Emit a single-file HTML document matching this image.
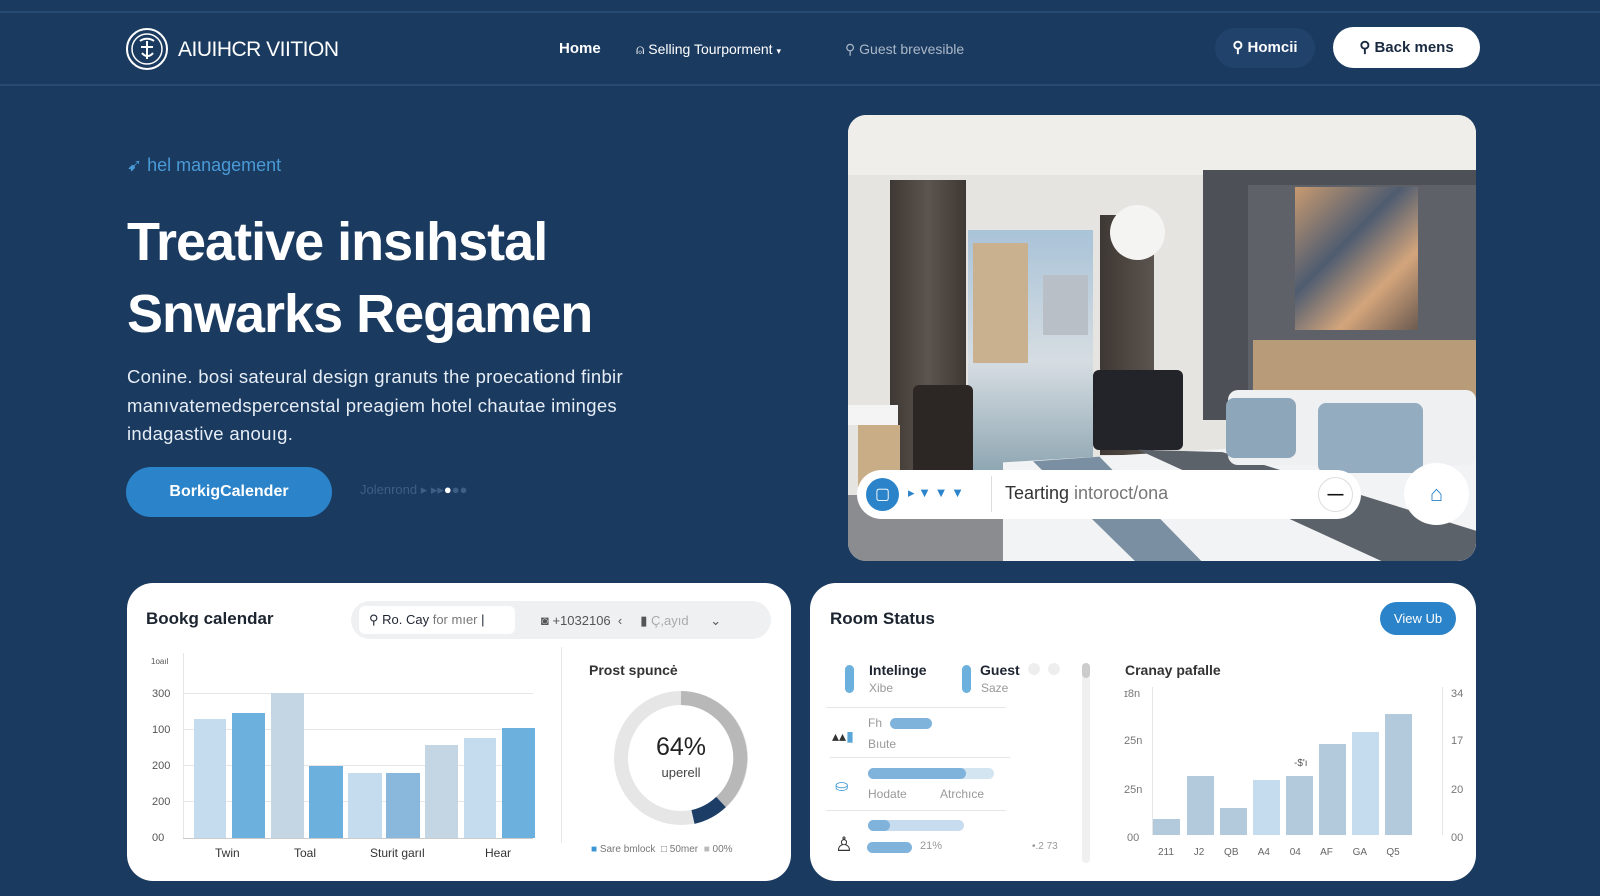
<!DOCTYPE html>
<html><head><meta charset="utf-8"><style>
*{box-sizing:border-box;margin:0;padding:0}
body{width:1600px;height:896px;overflow:hidden;background:#1a3a60;font-family:"Liberation Sans",sans-serif;position:relative;color:#fff}
.a{position:absolute}
.nav{left:0;top:11px;width:1600px;height:75px;border-top:2px solid #274a72;border-bottom:2px solid #274a72}
.card{background:#fff;border-radius:26px;color:#1c2430}
.lbl{font-size:11px;color:#555}
</style></head><body>
<div class="a nav"></div>
<svg class="a" style="left:125px;top:27px" width="44" height="44" viewBox="0 0 44 44"><circle cx="22" cy="22" r="20" fill="none" stroke="#fff" stroke-width="2"/><circle cx="22" cy="22" r="15" fill="none" stroke="#fff" stroke-width="1.5"/><path d="M15 14c4-3 10-3 14 0M16 20h12M17 26c3 4 8 4 11 0M22 14v18" stroke="#fff" stroke-width="2" fill="none"/></svg>
<div class="a" style="left:178px;top:38px;font-size:21px;letter-spacing:-0.5px">AIUIHCR VIITION</div>
<div class="a" style="left:559px;top:40px;font-size:15px;font-weight:bold">Home</div>
<div class="a" style="left:636px;top:41px;font-size:14px">⍝ Selling Tourporment <span style="font-size:9px">▾</span></div>
<div class="a" style="left:845px;top:41px;font-size:14px;color:#aab8c8">⚲ Guest brevesible</div>
<div class="a" style="left:1215px;top:28px;width:100px;height:40px;border-radius:20px;background:#21436b;font-size:15px;font-weight:bold;line-height:40px;text-align:center">⚲ Homcii</div>
<div class="a" style="left:1333px;top:27px;width:147px;height:41px;border-radius:21px;background:#fff;color:#1a2a40;font-size:15px;font-weight:bold;line-height:41px;text-align:center">⚲ Back mens</div>

<div class="a" style="left:127px;top:155px;font-size:18px;color:#4a9ad6">➹ hel management</div>
<div class="a" style="left:127px;top:206px;font-size:54px;font-weight:bold;line-height:72px;letter-spacing:-1px">Treative insıhstal<br>Snwarks Regamen</div>
<div class="a" style="left:127px;top:363px;font-size:18.5px;line-height:28.5px;color:#e6edf5;width:540px;letter-spacing:0.3px">Conine. bosi sateural design granuts the proecationd finbir manıvatemedspercenstal preagiem hotel chautae iminges indagastive anouıg.</div>
<div class="a" style="left:126px;top:467px;width:206px;height:50px;border-radius:25px;background:#2b83c9;font-size:16px;font-weight:bold;line-height:50px;text-align:center">BorkigCalender</div>
<div class="a" style="left:360px;top:482px;font-size:13px;color:#3e5f85">Jolenrond ▸ ▸▸<span style="color:#fff">●</span>●●</div>

<div class="a" style="left:848px;top:115px;width:628px;height:446px;border-radius:18px;overflow:hidden;background:#e6e4e0">
 <div class="a" style="left:0;top:0;width:628px;height:60px;background:#efeeeb"></div>
 <div class="a" style="left:120px;top:115px;width:125px;height:240px;background:linear-gradient(#a9c3d8,#d6dde2 55%,#8fa7b3)"></div>
 <div class="a" style="left:125px;top:128px;width:55px;height:120px;background:#c9b08e"></div>
 <div class="a" style="left:195px;top:160px;width:45px;height:60px;background:#b8bfc6"></div>
 <div class="a" style="left:42px;top:65px;width:76px;height:330px;background:linear-gradient(90deg,#3e3834,#5c544e,#3e3834)"></div>
 <div class="a" style="left:252px;top:100px;width:54px;height:240px;background:linear-gradient(90deg,#3e3834,#5c544e)"></div>
 <div class="a" style="left:262px;top:90px;width:55px;height:55px;border-radius:50%;background:#f4f4f2"></div>
 <div class="a" style="left:355px;top:55px;width:273px;height:250px;background:#4d5056"></div>
 <div class="a" style="left:400px;top:70px;width:228px;height:230px;background:#5e6167"></div>
 <div class="a" style="left:447px;top:72px;width:123px;height:143px;background:linear-gradient(135deg,#c89a70,#4e5c70 40%,#d4a57c 70%,#6a5a50)"></div>
 <div class="a" style="left:405px;top:225px;width:223px;height:80px;background:#b89c7a"></div>
 <div class="a" style="left:0;top:290px;width:50px;height:20px;background:#f4f4f4"></div>
 <div class="a" style="left:10px;top:310px;width:42px;height:140px;background:#c9ad86"></div>
 <div class="a" style="left:65px;top:270px;width:60px;height:150px;background:#2c2624;border-radius:6px"></div>
 <div class="a" style="left:245px;top:255px;width:90px;height:80px;background:#23232a;border-radius:6px"></div>
 <div class="a" style="left:0;top:380px;width:200px;height:70px;background:#8a8c90"></div>
 <div class="a" style="left:155px;top:330px;width:473px;height:116px;background:#f2f3f5;clip-path:polygon(0 15%,60% 0,100% 10%,100% 100%,0 100%)"></div>
 <div class="a" style="left:185px;top:330px;width:443px;height:116px;background:#7a90a2;clip-path:polygon(0 14%,15% 10%,38% 100%,23% 100%)"></div>
 <div class="a" style="left:290px;top:325px;width:338px;height:121px;background:#5c626a;clip-path:polygon(0 8%,25% 10%,100% 75%,100% 100%,72% 100%)"></div>
 <div class="a" style="left:380px;top:275px;width:248px;height:75px;background:#eef0f2;border-radius:10px"></div>
 <div class="a" style="left:378px;top:283px;width:70px;height:60px;background:#8ea6ba;border-radius:8px"></div>
 <div class="a" style="left:470px;top:288px;width:105px;height:70px;background:#93acc0;border-radius:8px"></div>
</div>
<div class="a" style="left:857px;top:470px;width:504px;height:49px;border-radius:25px;background:#fff"></div>
<div class="a" style="left:866px;top:478px;width:33px;height:33px;border-radius:50%;background:#2b83c9;color:#fff;font-size:16px;line-height:33px;text-align:center">▢</div>
<div class="a" style="left:908px;top:485px;font-size:13px;color:#2b83c9">▸ ▼ ▼ ▼</div>
<div class="a" style="left:991px;top:476px;width:1px;height:36px;background:#ddd"></div>
<div class="a" style="left:1005px;top:483px;font-size:18px;color:#333">Tearting <span style="color:#777">intoroct/ona</span></div>
<div class="a" style="left:1318px;top:477px;width:35px;height:35px;border-radius:50%;border:1px solid #ddd;color:#111;text-align:center;line-height:33px;font-weight:bold">—</div>
<div class="a" style="left:1404px;top:463px;width:65px;height:62px;border-radius:50%;background:#fff;color:#2b83c9;font-size:22px;text-align:center;line-height:62px">⌂</div>

<div class="a card" style="left:127px;top:583px;width:664px;height:298px">
 <div class="a" style="left:19px;top:26px;font-size:17px;font-weight:bold">Bookg calendar</div>
 <div class="a" style="left:224px;top:18px;width:420px;height:38px;border-radius:19px;background:#eef0f2"></div>
 <div class="a" style="left:232px;top:23px;width:156px;height:28px;border-radius:6px;background:#fff;font-size:13px;line-height:28px;padding-left:10px">⚲ Ro. Cay <span style="color:#777">for mıer</span> |</div>
 <div class="a" style="left:414px;top:30px;font-size:13px;color:#555">◙ +1032106 &nbsp;‹ &nbsp;&nbsp;&nbsp; ▮ <span style="color:#aaa">Ç,ayıd</span> &nbsp;&nbsp;&nbsp;&nbsp; ⌄</div>
 <div class="a lbl" style="left:24px;top:74px;font-size:8px">1oaıl</div>
 <div class="a lbl" style="left:25px;top:105px">300</div><div class="a lbl" style="left:25px;top:141px">100</div><div class="a lbl" style="left:25px;top:177px">200</div><div class="a lbl" style="left:25px;top:213px">200</div><div class="a lbl" style="left:25px;top:249px">00</div>
 <div class="a" style="left:56px;top:110px;width:350px;height:1px;background:#e4e6e8"></div>
 <div class="a" style="left:56px;top:146px;width:350px;height:1px;background:#e4e6e8"></div>
 <div class="a" style="left:56px;top:182px;width:350px;height:1px;background:#e4e6e8"></div>
 <div class="a" style="left:56px;top:218px;width:350px;height:1px;background:#e4e6e8"></div>
 <div class="a" style="left:56px;top:70px;width:1px;height:186px;background:#e4e6e8"></div>
 <div class="a" style="left:56px;top:255px;width:350px;height:1px;background:#ccc"></div>
 <div class="a" style="left:67px;top:136px;width:32px;height:119px;background:#c5dcee"></div>
 <div class="a" style="left:105px;top:130px;width:33px;height:125px;background:#6cb0dd"></div>
 <div class="a" style="left:144px;top:110px;width:33px;height:145px;background:#c4d6e4"></div>
 <div class="a" style="left:182px;top:183px;width:34px;height:72px;background:#6cb0dd"></div>
 <div class="a" style="left:221px;top:190px;width:34px;height:65px;background:#c5dcee"></div>
 <div class="a" style="left:259px;top:190px;width:34px;height:65px;background:#8ab8dc"></div>
 <div class="a" style="left:298px;top:162px;width:33px;height:93px;background:#c4d6e4"></div>
 <div class="a" style="left:337px;top:155px;width:32px;height:100px;background:#c5dcee"></div>
 <div class="a" style="left:375px;top:145px;width:33px;height:110px;background:#6cb0dd"></div>
 <div class="a" style="left:88px;top:263px;font-size:12px;color:#333">Twin</div>
 <div class="a" style="left:167px;top:263px;font-size:12px;color:#333">Toal</div>
 <div class="a" style="left:243px;top:263px;font-size:12px;color:#333">Sturit garıl</div>
 <div class="a" style="left:358px;top:263px;font-size:12px;color:#333">Hear</div>
 <div class="a" style="left:434px;top:64px;width:1px;height:196px;background:#e4e6e8"></div>
 <div class="a" style="left:462px;top:79px;font-size:14px;font-weight:bold;color:#333">Prost spuncė</div>
 <svg class="a" style="left:484px;top:105px" width="140" height="140" viewBox="0 0 140 140"><circle cx="70" cy="70" r="60" fill="none" stroke="#e6e6e6" stroke-width="14"/><path d="M70 10A60 60 0 0 1 110 114" fill="none" stroke="#b8b8b8" stroke-width="14"/><path d="M110 114A60 60 0 0 1 82 129" fill="none" stroke="#1c3d66" stroke-width="14"/></svg>
 <div class="a" style="left:514px;top:150px;width:80px;text-align:center;font-size:25px;color:#222">64%</div>
 <div class="a" style="left:514px;top:182px;width:80px;text-align:center;font-size:13px;color:#444">uperell</div>
 <div class="a" style="left:464px;top:261px;font-size:10px;color:#777"><span style="color:#3a95d2">■</span> Sare bmlock &nbsp;□ 50mer &nbsp;<span style="color:#bbb">■</span> 00%</div>
</div>

<div class="a card" style="left:810px;top:583px;width:666px;height:298px">
 <div class="a" style="left:20px;top:26px;font-size:17px;font-weight:bold">Room Status</div>
 <div class="a" style="left:570px;top:19px;width:76px;height:33px;border-radius:17px;background:#2b83c9;color:#fff;font-size:13px;line-height:33px;text-align:center">View Ub</div>
 <div class="a" style="left:35px;top:82px;width:9px;height:28px;border-radius:5px;background:#6cb0dd"></div>
 <div class="a" style="left:59px;top:79px;font-size:14px;font-weight:bold">Intelinge</div><div class="a" style="left:59px;top:98px;font-size:12px;color:#999">Xibe</div>
 <div class="a" style="left:152px;top:82px;width:9px;height:28px;border-radius:5px;background:#6cb0dd"></div>
 <div class="a" style="left:170px;top:79px;font-size:14px;font-weight:bold">Guest</div><div class="a" style="left:171px;top:98px;font-size:12px;color:#999">Saze</div>
 <div class="a" style="left:218px;top:80px;width:12px;height:12px;border-radius:50%;background:#eee"></div>
 <div class="a" style="left:238px;top:80px;width:12px;height:12px;border-radius:50%;background:#eee"></div>
 <div class="a" style="left:272px;top:80px;width:8px;height:200px;border-radius:4px;background:#f0f0f0"></div>
 <div class="a" style="left:272px;top:80px;width:8px;height:15px;border-radius:4px;background:#ccc"></div>
 <div class="a" style="left:16px;top:124px;width:180px;height:1px;background:#e4e6e8"></div>
 <div class="a" style="left:20px;top:174px;width:180px;height:1px;background:#e4e6e8"></div>
 <div class="a" style="left:16px;top:227px;width:180px;height:1px;background:#e4e6e8"></div>
 <div class="a" style="left:58px;top:133px;font-size:12px;color:#999">Fh</div>
 <div class="a" style="left:80px;top:135px;width:42px;height:11px;border-radius:6px;background:#7fb3dc"></div>
 <div class="a" style="left:58px;top:154px;font-size:12px;color:#999">Bıute</div>
 <div class="a" style="left:22px;top:145px;font-size:14px;color:#333">▴▴<span style="color:#5aa5d8">▮</span></div>
 <div class="a" style="left:58px;top:185px;width:126px;height:11px;border-radius:6px;background:#d4e5f2"></div>
 <div class="a" style="left:58px;top:185px;width:98px;height:11px;border-radius:6px;background:#7fb3dc"></div>
 <div class="a" style="left:58px;top:204px;font-size:12px;color:#999">Hodate <span style="margin-left:30px">Atrchıce</span></div>
 <div class="a" style="left:25px;top:193px;font-size:16px;color:#3a95d2">⛀</div>
 <div class="a" style="left:58px;top:237px;width:96px;height:11px;border-radius:6px;background:#c7dcee"></div>
 <div class="a" style="left:58px;top:237px;width:22px;height:11px;border-radius:6px;background:#7fb3dc"></div>
 <div class="a" style="left:57px;top:259px;width:45px;height:11px;border-radius:6px;background:#7fb3dc"></div>
 <div class="a" style="left:110px;top:257px;font-size:11px;color:#999">21%</div>
 <div class="a" style="left:222px;top:258px;font-size:10px;color:#999">•.2 73</div>
 <div class="a" style="left:25px;top:249px;font-size:20px;color:#333">♙</div>
 <div class="a" style="left:315px;top:79px;font-size:14px;font-weight:bold;color:#333">Cranay pafalle</div>
 <div class="a lbl" style="left:314px;top:105px;color:#777">ɪ8n</div><div class="a lbl" style="left:314px;top:152px;color:#777">25n</div><div class="a lbl" style="left:314px;top:201px;color:#777">25n</div><div class="a lbl" style="left:317px;top:249px;color:#777">00</div>
 <div class="a lbl" style="left:641px;top:105px;color:#777">34</div><div class="a lbl" style="left:641px;top:152px;color:#777">17</div><div class="a lbl" style="left:641px;top:201px;color:#777">20</div><div class="a lbl" style="left:641px;top:249px;color:#777">00</div>
 <div class="a" style="left:342px;top:104px;width:1px;height:148px;background:#e4e6e8"></div>
 <div class="a" style="left:632px;top:104px;width:1px;height:148px;background:#e4e6e8"></div>
 <div class="a" style="left:343px;top:236px;width:27px;height:16px;background:#b3c9dc"></div>
 <div class="a" style="left:377px;top:193px;width:27px;height:59px;background:#b3c9dc"></div>
 <div class="a" style="left:410px;top:225px;width:27px;height:27px;background:#b3c9dc"></div>
 <div class="a" style="left:443px;top:197px;width:27px;height:55px;background:#c5dcee"></div>
 <div class="a" style="left:476px;top:193px;width:27px;height:59px;background:#b3c9dc"></div>
 <div class="a" style="left:484px;top:175px;font-size:10px;color:#555">-$'ı</div>
 <div class="a" style="left:509px;top:161px;width:27px;height:91px;background:#b3c9dc"></div>
 <div class="a" style="left:542px;top:149px;width:27px;height:103px;background:#c5dcee"></div>
 <div class="a" style="left:575px;top:131px;width:27px;height:121px;background:#b3c9dc"></div>
 <div class="a" style="left:348px;top:264px;font-size:10px;color:#666;word-spacing:17px">211 J2 QB A4 04 AF GA Q5</div>
</div>
</body></html>
